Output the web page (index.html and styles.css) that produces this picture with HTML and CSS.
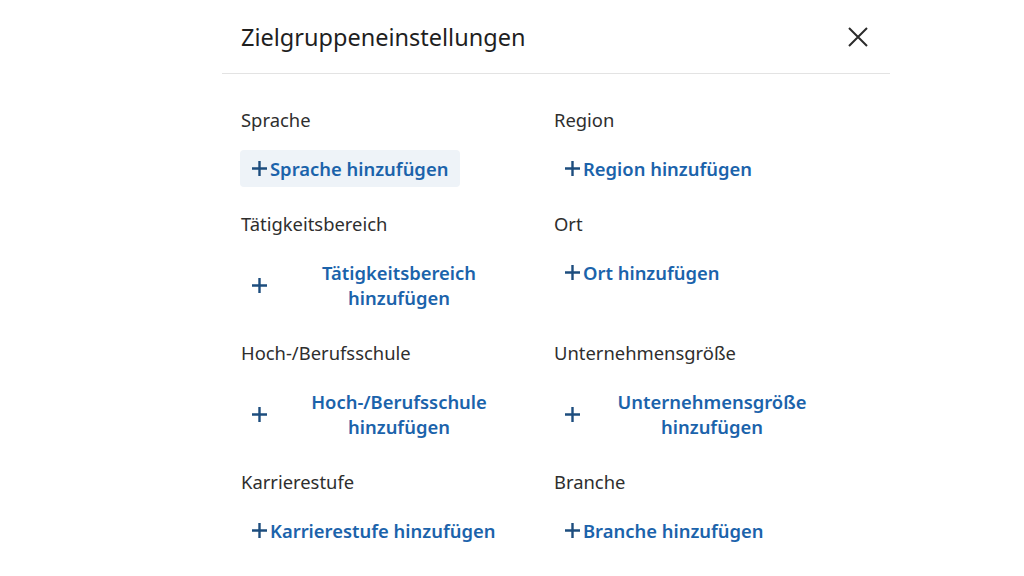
FILE: index.html
```html
<!DOCTYPE html>
<html lang="de">
<head>
<meta charset="utf-8">
<title>Zielgruppeneinstellungen</title>
<link rel="stylesheet" href="styles.css">
</head>
<body>
<div class="dialog">
  <header class="dialog-header">
    <h1 class="dialog-title">Zielgruppeneinstellungen</h1>
    <button class="close-btn" aria-label="Schließen">
      <svg width="20" height="20" viewBox="0 0 20 20"><path d="M1 1 L19 19 M19 1 L1 19" stroke="#2b2b2b" stroke-width="2" fill="none"/></svg>
    </button>
  </header>
  <div class="dialog-body">
    <div class="field">
      <div class="field-label">Sprache</div>
      <button class="add-btn active"><span class="plus"><svg width="15" height="15" viewBox="0 0 15 15"><path d="M7.5 0 V15 M0 7.5 H15" stroke="currentColor" stroke-width="2.4"/></svg></span><span class="add-text">Sprache hinzufügen</span></button>
    </div>
    <div class="field">
      <div class="field-label">Region</div>
      <button class="add-btn"><span class="plus"><svg width="15" height="15" viewBox="0 0 15 15"><path d="M7.5 0 V15 M0 7.5 H15" stroke="currentColor" stroke-width="2.4"/></svg></span><span class="add-text">Region hinzufügen</span></button>
    </div>
    <div class="field">
      <div class="field-label">Tätigkeitsbereich</div>
      <button class="add-btn"><span class="plus"><svg width="15" height="15" viewBox="0 0 15 15"><path d="M7.5 0 V15 M0 7.5 H15" stroke="currentColor" stroke-width="2.4"/></svg></span><span class="add-text">Tätigkeitsbereich hinzufügen</span></button>
    </div>
    <div class="field">
      <div class="field-label">Ort</div>
      <button class="add-btn"><span class="plus"><svg width="15" height="15" viewBox="0 0 15 15"><path d="M7.5 0 V15 M0 7.5 H15" stroke="currentColor" stroke-width="2.4"/></svg></span><span class="add-text">Ort hinzufügen</span></button>
    </div>
    <div class="field">
      <div class="field-label">Hoch-/Berufsschule</div>
      <button class="add-btn"><span class="plus"><svg width="15" height="15" viewBox="0 0 15 15"><path d="M7.5 0 V15 M0 7.5 H15" stroke="currentColor" stroke-width="2.4"/></svg></span><span class="add-text">Hoch-/Berufsschule hinzufügen</span></button>
    </div>
    <div class="field">
      <div class="field-label">Unternehmensgröße</div>
      <button class="add-btn"><span class="plus"><svg width="15" height="15" viewBox="0 0 15 15"><path d="M7.5 0 V15 M0 7.5 H15" stroke="currentColor" stroke-width="2.4"/></svg></span><span class="add-text">Unternehmensgröße hinzufügen</span></button>
    </div>
    <div class="field">
      <div class="field-label">Karrierestufe</div>
      <button class="add-btn"><span class="plus"><svg width="15" height="15" viewBox="0 0 15 15"><path d="M7.5 0 V15 M0 7.5 H15" stroke="currentColor" stroke-width="2.4"/></svg></span><span class="add-text">Karrierestufe hinzufügen</span></button>
    </div>
    <div class="field">
      <div class="field-label">Branche</div>
      <button class="add-btn"><span class="plus"><svg width="15" height="15" viewBox="0 0 15 15"><path d="M7.5 0 V15 M0 7.5 H15" stroke="currentColor" stroke-width="2.4"/></svg></span><span class="add-text">Branche hinzufügen</span></button>
    </div>
  </div>
</div>
</body>
</html>
```
FILE: styles.css
```css
* { box-sizing: border-box; }
html, body {
  margin: 0;
  padding: 0;
  background: #ffffff;
}
body {
  font-family: "Noto Sans", "Open Sans", sans-serif;
  color: #333333;
}
.dialog {
  width: 668px;
  margin-left: 222px;
}
.dialog-header {
  height: 74px;
  display: flex;
  align-items: center;
  justify-content: space-between;
  padding: 0 22px 0 19px;
  border-bottom: 1px solid #e3e3e3;
}
.dialog-title {
  margin: 0;
  font-size: 23.5px;
  font-weight: 400;
  color: #1f1f1f;
  line-height: 30px;
}
.close-btn {
  border: 0;
  background: none;
  padding: 0;
  width: 20px;
  height: 20px;
  display: flex;
  cursor: pointer;
}
.dialog-body {
  display: grid;
  grid-template-columns: 313px 313px;
  row-gap: 25px;
  padding: 34px 19px 20px 19px;
}
.field {
  display: flex;
  flex-direction: column;
  align-items: flex-start;
  gap: 18px;
}
.field-label {
  font-size: 18.4px;
  line-height: 24px;
  color: #2e2e2e;
}
.add-btn {
  display: flex;
  align-items: center;
  max-width: 300px;
  margin-left: -1px;
  padding: 6px 12px;
  border: 0;
  border-radius: 4px;
  background: transparent;
  font-family: inherit;
  font-size: 18.4px;
  font-weight: 600;
  line-height: 25px;
  color: #1b63ab;
  cursor: pointer;
}
.add-btn.active {
  background: #eef3f8;
}
.plus {
  display: flex;
  color: #1d4d7e;
  margin-right: 3px;
  flex: none;
}
.add-text {
  text-align: center;
}
```
